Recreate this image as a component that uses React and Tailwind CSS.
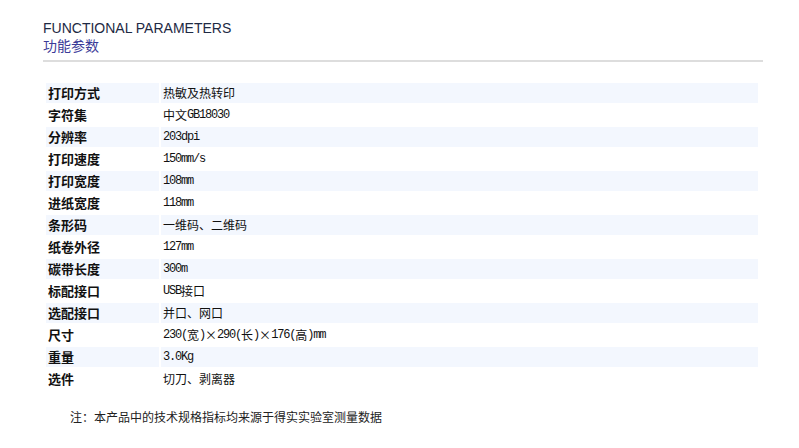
const specs = [
  ["打印方式", "热敏及热转印"],
  ["字符集", "中文GB18030"],
  ["分辨率", "203dpi"],
  ["打印速度", "150mm/s"],
  ["打印宽度", "108mm"],
  ["进纸宽度", "118mm"],
  ["条形码", "一维码、二维码"],
  ["纸卷外径", "127mm"],
  ["碳带长度", "300m"],
  ["标配接口", "USB接口"],
  ["选配接口", "并口、网口"],
  ["尺寸", "230(宽)×290(长)×176(高)mm"],
  ["重量", "3.0Kg"],
  ["选件", "切刀、剥离器"],
];

// split ascii runs so latin text gets the narrow mono look
function MixedText({ text }) {
  const parts = text.match(/[\x20-\x7e]+|[^\x20-\x7e]+/g) || [];
  return parts.map((p, i) =>
    /^[\x20-\x7e]+$/.test(p) ? (
      <span key={i} className="font-['Liberation_Mono',monospace] text-[12px] tracking-[-1.2px]">
        {p}
      </span>
    ) : (
      <span key={i}>{p}</span>
    )
  );
}

export default function App() {
  return (
    <div className="w-[799px] h-[448px] bg-white font-['Noto_Sans_CJK_SC',sans-serif] text-[#222]">
      <div className="pl-[43px] pt-[20px] w-[763px]">
        {/* Title */}
        <p className="font-['Liberation_Sans',sans-serif] text-[14px] leading-[17px] text-[#1e2a44]">
          FUNCTIONAL PARAMETERS
        </p>
        <p className="text-[14px] leading-[17px] text-[#3b3b98]">功能参数</p>
        <div className="mt-[6px] h-[2px] bg-[#dddddd]" />
      </div>

      {/* Spec table */}
      <div className="mt-[21px] ml-[46px] w-[712px] flex flex-col gap-[2px]">
        {specs.map(([label, value], i) => (
          <div key={label} className="flex gap-[2px] h-[20px]">
            <div
              className={
                "w-[113px] pl-[2px] flex items-center text-[13px] font-bold text-[#111] " +
                (i % 2 === 0 ? "bg-[#f3f7fe]" : "bg-white")
              }
            >
              {label}
            </div>
            <div
              className={
                "flex-1 pl-[2px] flex items-center text-[12px] text-[#111] " +
                (i % 2 === 0 ? "bg-[#f3f7fe]" : "bg-white")
              }
            >
              <MixedText text={value} />
            </div>
          </div>
        ))}
      </div>

      {/* Note */}
      <p className="mt-[20px] ml-[70px] text-[12px] leading-[16px] text-[#222]">
        注：本产品中的技术规格指标均来源于得实实验室测量数据
      </p>
    </div>
  );
}
